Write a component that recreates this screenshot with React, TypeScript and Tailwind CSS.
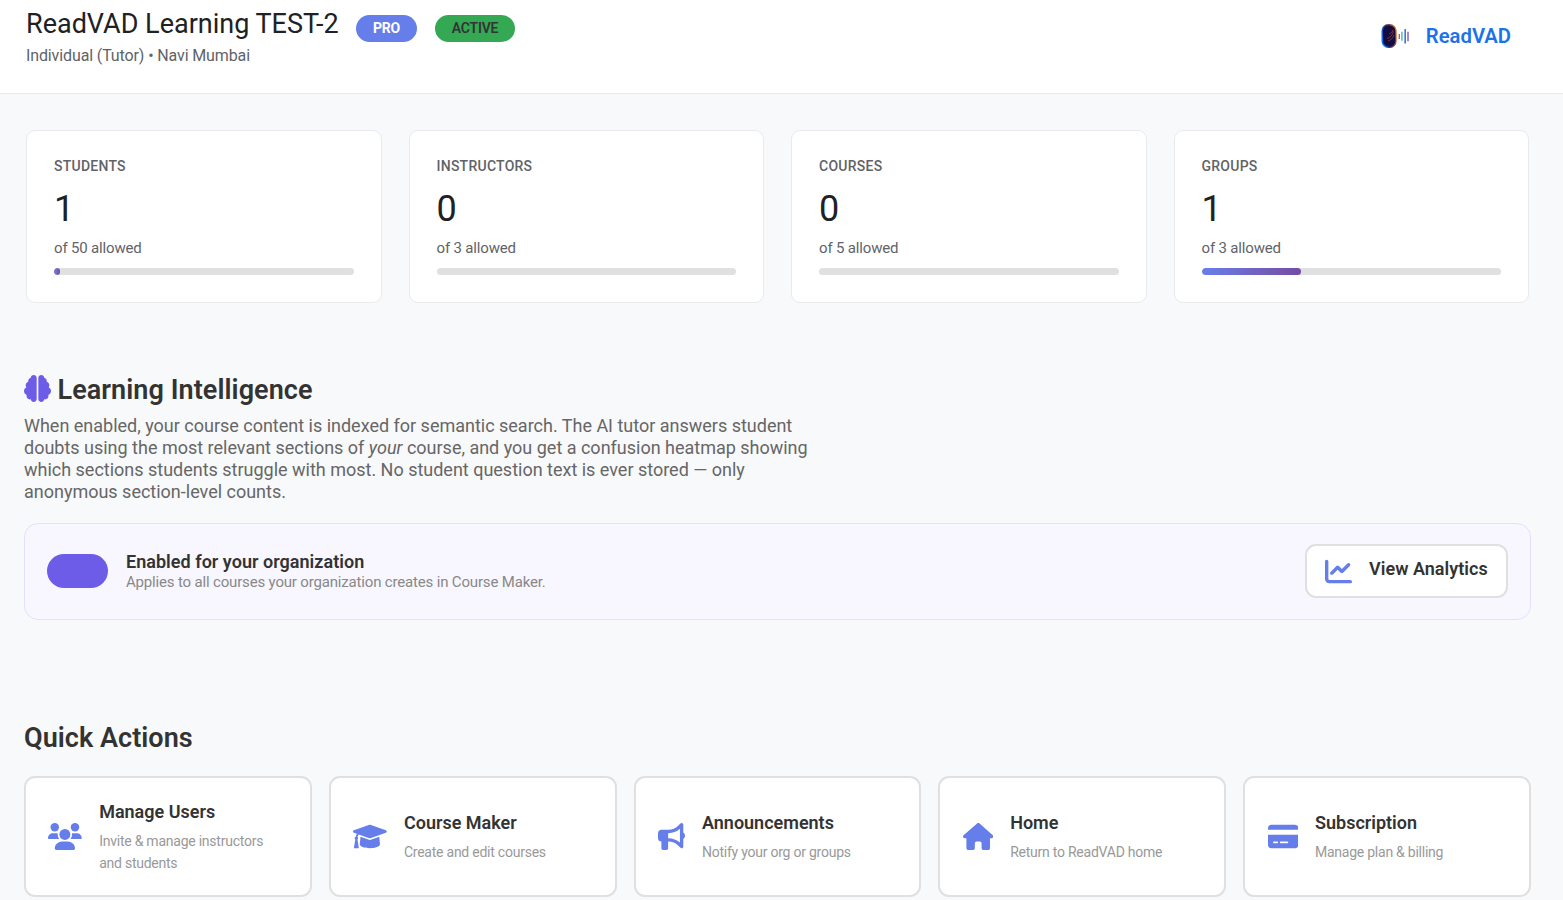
import type { ComponentType } from "react";
import { FaBrain, FaBullhorn, FaChartLine, FaCreditCard, FaHouse } from "react-icons/fa6";

type Stat = { label: string; used: number; limit: number };

const stats: Stat[] = [
  { label: "Students", used: 1, limit: 50 },
  { label: "Instructors", used: 0, limit: 3 },
  { label: "Courses", used: 0, limit: 5 },
  { label: "Groups", used: 1, limit: 3 },
];

type Action = {
  icon: ComponentType<{ className?: string }>;
  iconWidth: string;
  title: string;
  sub: string;
};

// The glyphs share a height but not a width
const actions: Action[] = [
  {
    icon: UsersIcon,
    iconWidth: "w-[33.75px]",
    title: "Manage Users",
    sub: "Invite & manage instructors and students",
  },
  {
    icon: GraduationCapIcon,
    iconWidth: "w-[33.75px]",
    title: "Course Maker",
    sub: "Create and edit courses",
  },
  {
    icon: FaBullhorn,
    iconWidth: "w-[27px]",
    title: "Announcements",
    sub: "Notify your org or groups",
  },
  { icon: FaHouse, iconWidth: "w-[30.4px]", title: "Home", sub: "Return to ReadVAD home" },
  {
    icon: FaCreditCard,
    iconWidth: "w-[30.4px]",
    title: "Subscription",
    sub: "Manage plan & billing",
  },
];

export default function App() {
  return (
    <div className="h-[900px] overflow-hidden bg-[#f8f9fb] font-['Roboto',sans-serif] text-[#202124]">
      <Header />

      <section className="grid grid-cols-4 gap-[27px] pt-9 pr-[34px] pl-[26px]">
        {stats.map((s) => (
          <StatCard key={s.label} stat={s} />
        ))}
      </section>

      <section className="mt-[70px] pr-8 pl-6">
        <h2 className="flex h-8 items-center gap-[6.5px] text-[27px] font-semibold tracking-[0.07px] text-[#333]">
          <FaBrain className="-mt-px text-[#6c5ce7]" />
          <span className="mt-0.5">Learning Intelligence</span>
        </h2>
        <p className="mt-[10px] w-[800px] text-[18px] leading-[22px] tracking-[-0.007px] text-[#666]">
          When enabled, your course content is indexed for semantic search. The AI tutor answers
          student doubts using the most relevant sections of <em>your</em> course, and you get a
          confusion heatmap showing which sections students struggle with most. No student question
          text is ever stored — only anonymous section-level counts.
        </p>

        <div className="mt-5 flex h-[97px] items-center rounded-[14px] border border-[#e4dfff] bg-[#f8f7ff] px-[22px] pb-0.5">
          <button className="h-[34px] w-[61px] rounded-[17px] bg-[#6c5ce7]" aria-label="Toggle" />
          <div className="ml-[18px] pt-0.5">
            <div className="text-[18px] leading-[21px] font-semibold tracking-[0.03px] text-[#333]">
              Enabled for your organization
            </div>
            <div className="text-[15px] leading-[20px] tracking-[-0.17px] text-[#888]">
              Applies to all courses your organization creates in Course Maker.
            </div>
          </div>
          <button className="ml-auto flex h-[54px] w-[203px] items-center gap-[17px] rounded-[11px] border-2 border-[#e0e0e0] bg-white pl-[18px]">
            <FaChartLine className="mt-0.5 text-[27px] text-[#667eea]" />
            <span className="-mt-1 text-[18px] font-semibold tracking-[0.03px] text-[#333]">
              View Analytics
            </span>
          </button>
        </div>
      </section>

      <section className="mt-[102px] pr-8 pl-6">
        <h2 className="h-8 text-[27px] leading-8 font-semibold tracking-[0.04px] text-[#333]">
          Quick Actions
        </h2>
        <div className="mt-[22px] grid grid-cols-5 gap-[17px]">
          {actions.map((a) => (
            <ActionCard key={a.title} action={a} />
          ))}
        </div>
      </section>
    </div>
  );
}

function Header() {
  return (
    <header className="flex h-[94px] justify-between border-b border-[#e8eaed] bg-white pr-[52px] pl-[26px]">
      <div className="pt-2">
        <div className="flex h-8 items-center">
          <h1 className="w-[312px] text-[27px] leading-8 whitespace-nowrap">
            ReadVAD Learning TEST-2
          </h1>
          <span className="mt-2 ml-[18px] flex h-[27px] w-[61px] items-center justify-center rounded-full bg-[#667eea] text-[14px] font-bold tracking-[-0.2px] text-white">
            PRO
          </span>
          <span className="mt-2 ml-[18px] flex h-[27px] w-[80px] items-center justify-center rounded-full bg-[#34a853] text-[14px] font-semibold tracking-[-0.2px] text-[#333]">
            ACTIVE
          </span>
        </div>
        <p className="mt-[6px] text-[16px] leading-5 tracking-[-0.12px] text-[#5f6368]">
          Individual (Tutor) • Navi Mumbai
        </p>
      </div>
      <div className="flex h-[72px] items-center gap-4">
        <Logo />
        <span className="text-[20.25px] font-semibold text-[#1a73e8]">ReadVAD</span>
      </div>
    </header>
  );
}

function StatCard({ stat }: { stat: Stat }) {
  const pct = (stat.used / stat.limit) * 100;
  return (
    <div className="h-[173px] rounded-[9px] border border-[#e8eaed] bg-white px-[27px] pt-[27px]">
      <div className="text-[14px] leading-4 font-medium tracking-[0.25px] text-[#5f6368] uppercase">
        {stat.label}
      </div>
      <div className="mt-[14px] text-[36px] leading-[42px]">{stat.used}</div>
      <div className="mt-[9px] text-[15px] leading-[18px] tracking-[-0.17px] text-[#5f6368]">
        of {stat.limit} allowed
      </div>
      <div className="mt-[11px] h-[7px] overflow-hidden rounded-full bg-[#e0e0e0]">
        <div
          className="h-full rounded-full bg-linear-to-r from-[#667eea] to-[#764ba2]"
          style={{ width: `${pct}%` }}
        />
      </div>
    </div>
  );
}

function ActionCard({ action }: { action: Action }) {
  const Icon = action.icon;
  return (
    <button className="flex h-[121px] items-center gap-[17px] rounded-[11px] border-2 border-[#e0e0e0] bg-white px-[22.4px] text-left">
      <Icon className={`h-[27px] shrink-0 text-[#667eea] ${action.iconWidth}`} />
      <div className="pt-0.5">
        <div className="text-[18px] leading-[22px] font-semibold text-[#333]">{action.title}</div>
        <div className="mt-[7px] text-[14px] leading-[22px] tracking-[-0.24px] text-[#999]">
          {action.sub}
        </div>
      </div>
    </button>
  );
}

function UsersIcon({ className }: { className?: string }) {
  return (
    <svg viewBox="0 0 640 512" fill="currentColor" className={className}>
      <circle cx="128" cy="80" r="80" />
      <circle cx="512" cy="80" r="80" />
      <circle cx="320" cy="216" r="104" />
      <path d="M370 352H270c-78.500 0-142 59.700-142 133.300 0 14.800 12.700 26.700 28.400 26.700h327.200c15.700 0 28.400-11.900 28.400-26.700C512 411.700 448.400 352 370 352z" />
      <path d="M184 216c0-5.400 1-10.600 1.600-15.900-11-5.100-23-8.100-35.700-8.100H88c-48.600 0-88 41.800-88 93.300C0 295.600 7.900 304 17.600 304h199.500C196.700 280.200 184 249.700 184 216z" />
      <path d="M552 192h-62c-12.800 0-24.900 3-35.800 8.200.6 5.300 1.600 10.400 1.600 15.800 0 33.700-12.800 64.200-33.200 88h199.700c9.800 0 17.700-8.400 17.700-18.700 0-51.500-39.400-93.300-88-93.300z" />
    </svg>
  );
}

function GraduationCapIcon({ className }: { className?: string }) {
  return (
    <svg viewBox="0 0 640 512" fill="currentColor" className={className}>
      <path d="M623.100 136.900l-281.400-101.200c-13.700-4.900-29.700-4.900-43.400 0L16 136.900C6.400 140.400 0 149.600 0 160s6.400 19.600 16 23.100l60 21.500c-11.900 15.800-20.200 34.200-24.500 54C40 263.400 32 274.800 32 288c0 10 4.800 18.500 11.900 24.400l-24.800 149C17.500 471.100 25 480 34.900 480h58.200c9.900 0 17.400-8.900 15.800-18.600l-24.800-149C91.200 306.500 96 298 96 288c0-10.300-5.200-19-12.700-24.900 4.200-17.800 12.900-33.800 24.900-47l190.100 68.200c13.700 4.900 29.700 4.900 43.400 0l281.400-101.200C633.600 179.600 640 170.400 640 160s-6.400-19.600-16.900-23.100z" />
      <path d="M352 314.400c-10.300 3.700-21.100 5.600-32 5.600s-21.700-1.900-32-5.600l-145.200-51.900L128 405.300C128 446.600 213.100 480 320 480c105.100 0 192-33.400 192-74.700l-14.800-142.900L352 314.400z" />
    </svg>
  );
}

// Head in profile with sound bars to its right
function Logo() {
  return (
    <svg width="30" height="26" viewBox="0 0 30 26" fill="none">
      <defs>
        <linearGradient id="rim" x1="0" y1="0.7" x2="1" y2="0.3">
          <stop offset="0" stopColor="#0a7cff" />
          <stop offset="0.45" stopColor="#2a2a7a" />
          <stop offset="1" stopColor="#f07818" />
        </linearGradient>
      </defs>
      <rect x="1.5" y="1" width="15.2" height="24" rx="7" fill="url(#rim)" />
      <rect x="3" y="2.6" width="12.4" height="20.8" rx="5.5" fill="#140c40" />
      <path
        d="M7 15.5c3-1 5.5-3 6.500-7M8 18c3-1 5-3 6-6M9 11c2-1 3.500-2 4-4"
        stroke="#c2502c"
        strokeOpacity="0.6"
      />
      <path d="M19.300 11v5" stroke="#b5654a" strokeWidth="1.4" />
      <path d="M21.900 8.700v9" stroke="#4cb5c4" strokeWidth="1.4" />
      <path d="M25.200 6v14.500" stroke="#4a6fd0" strokeWidth="1.6" />
      <path d="M28 8.700v9.500" stroke="#8a6fd0" strokeWidth="1.6" />
    </svg>
  );
}
